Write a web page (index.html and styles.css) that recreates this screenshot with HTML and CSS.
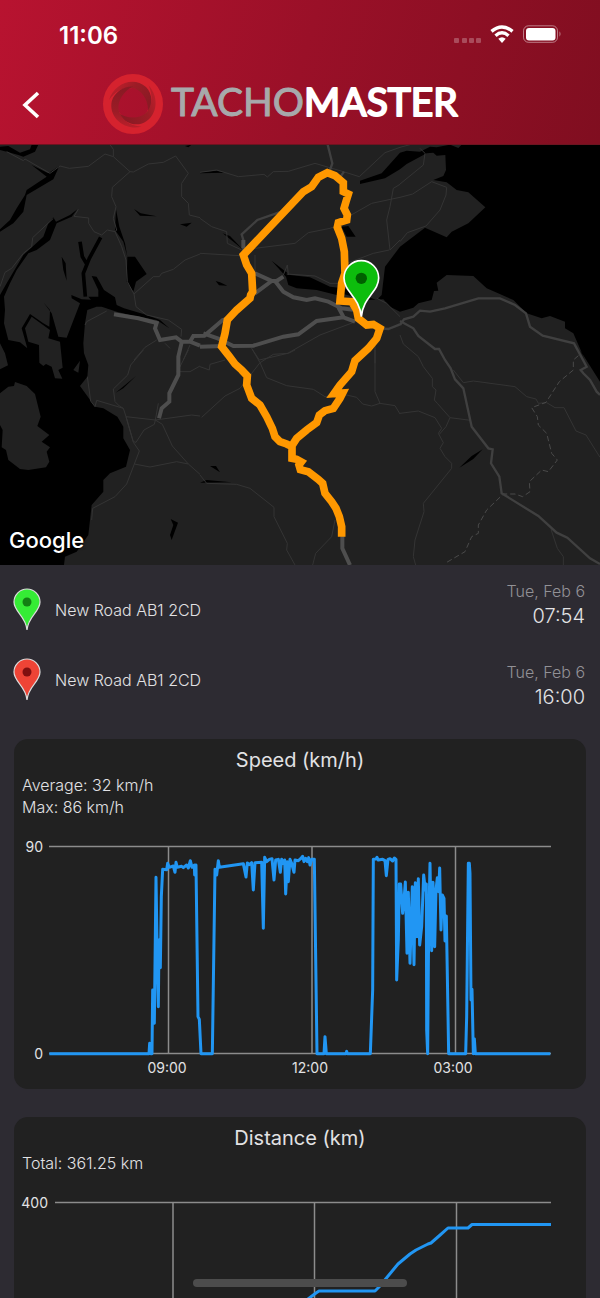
FILE: index.html
```
<!DOCTYPE html>
<html lang="en">

<head>
    <meta charset="UTF-8">
    <meta name="viewport" content="width=device-width, initial-scale=1.0">
    <title>Tachomaster</title>
    <link rel="stylesheet" href="styles.css">
</head>

<body>
    <div class="screen">
        <header class="header">
            <div class="status-bar">
                <span class="clock">11:06</span>
                <svg class="status-icons" width="108" height="20" viewBox="0 0 108 20" aria-hidden="true">
                    <g fill="#fff" fill-opacity=".25">
                        <rect x="0" y="13" width="5" height="5" rx="1" />
                        <rect x="8" y="13" width="5" height="5" rx="1" />
                        <rect x="15" y="13" width="5" height="5" rx="1" />
                        <rect x="22" y="13" width="5" height="5" rx="1" />
                    </g>
                    <g fill="none" stroke="#fff" stroke-width="3.4">
                        <path d="M37.500 6.400Q48 -2.600 58.500 6.400" />
                        <path d="M41.500 10.700Q48 5 54.500 10.700" />
                    </g>
                    <path fill="#fff" d="M44.300 13.700Q48 10.600 51.700 13.700L48 18Z" />
                    <rect x="69.500" y=".800" width="34" height="16.500" rx="5" fill="none" stroke="#fff" stroke-opacity=".45" />
                    <rect x="72" y="3" width="29.500" height="12.500" rx="3" fill="#fff" />
                    <path fill="#fff" fill-opacity=".5" d="M105.500 6.300q2 2.700 0 5.400z" />
                </svg>
            </div>
            <div class="title-bar">
                <button class="back" type="button" aria-label="Back">
                    <svg width="20" height="28" viewBox="0 0 20 28">
                        <path d="M18 2L5 14l13 12" fill="none" stroke="#fff" stroke-width="3.600" />
                    </svg>
                </button>
                <svg class="logo" width="360" height="64" viewBox="0 0 360 64" role="img" aria-label="Tachomaster">
                    <defs>
                        <linearGradient id="blade" x1="0" y1="0" x2="1" y2=".6">
                            <stop offset="0" stop-color="#cc212d" />
                            <stop offset=".5" stop-color="#9c1c26" />
                            <stop offset="1" stop-color="#8a1a24" />
                        </linearGradient>
                        <path id="swirl" d="M7 27C12 10 32 3 44 14C51 21 51 33 46 40C47 30 42 19 33 15.500C24 13 14 17 7 27Z" fill="url(#blade)" />
                    </defs>
                    <circle cx="31" cy="31" r="23" fill="none" stroke="#d5222e" stroke-width="14" />
                    <use href="#swirl" />
                    <use href="#swirl" transform="rotate(120 31 31)" />
                    <use href="#swirl" transform="rotate(240 31 31)" />
                    <text class="logo-text" x="69" y="43"><tspan class="logo-grey">TACHO</tspan><tspan class="logo-white">MASTER</tspan></text>
                </svg>
            </div>
        </header>

        <div class="map">
            <svg viewBox="0 0 1800 1260" preserveAspectRatio="xMidYMid slice" aria-label="Route map">
                <!-- water -->
                <g transform="translate(0 -15)">
                    <path d="M160 232L168 245L210 225L232 208L215 230L170 250L150 300L110 330L85 340L50 390L30 430L12 470L15 510L12 550L25 600L60 607L82 625L65 565L90 522L130 550L148 560L150 510L130 487L155 520L175 590L200 593L240 490L215 475L214 465L245 478L290 480L290 500L262 510L255 550L250 610L252 640L265 675L262 710L240 738L285 800L310 805L352 830L370 860L370 895L390 930L378 980L330 1000L310 1020L310 1055L275 1095L265 1185L230 1235L195 1250L192 1275L0 1275L0 465L20 430L70 345L130 290L145 250Z" />
                    <path d="M0 20L25 18L60 38L90 28L95 14L115 14L105 35L70 50L55 45L20 35L0 30ZM95 75L145 100L178 78L160 118L80 165L70 215L40 250L0 275V268L30 240L50 205L75 165L80 150L140 110Z" />
                    <path d="M348 208L358 260L375 310L382 350L405 350L440 402L408 425L400 455L380 425L382 350L370 305L345 270ZM275 408L290 410L312 450L345 472L350 495L372 505L440 525L480 540L508 565L470 540L390 525L350 515L305 500L290 500L265 470L295 470L295 450ZM185 350L197 370L200 422L190 390ZM402 207L422 220L470 229L420 227ZM540 253L575 248L560 260ZM555 18L575 14L565 22ZM347 758L408 708L370 745ZM512 1137L534 1148L515 1200L510 1185L520 1155Z" />
                    <path d="M302 292L268 355L250 400L256 470M240 305L247 350L262 375" fill="none" stroke="#000" stroke-width="11" />
                    <path class="land" d="M0 760L25 740L42 738L45 726L80 738L105 762L122 830L112 858L148 885L125 905L150 922L140 935L148 965L138 982L85 990L60 987L25 960L18 930L5 922L8 870L0 855ZM0 610L15 640L24 676L0 688ZM117 615L118 668L130 678L138 672L155 680L165 715L187 716L175 690L188 683L180 605L145 595L150 570L95 530L75 565L85 605ZM240 662L220 690L235 698Z" />
                </g>
                <g transform="translate(600 -15)">
                    <path d="M0 97L50 92L75 98L0 100ZM425 260L445 258L467 290L440 290ZM68 280L90 288L128 328L100 305ZM47 423L60 427L82 437L57 436ZM30 978L48 978L60 997ZM0 1028L20 1020L95 1027Z" />
                    <path d="M778 983L815 948L848 928L820 957Z" />
                </g>
                <path d="M1385 -1L1800 -1L1800 710L1740 615L1755 645L1720 565L1695 550L1695 530L1650 513L1625 520L1580 505L1540 465L1460 430L1420 393L1340 390L1310 413L1315 437L1302 438L1295 465L1255 475L1240 488L1200 500L1170 485L1150 463L1100 465L1030 447L1010 450L950 435L890 430L865 420L858 395L815 347L870 390L930 397L990 425L1030 430L1130 465L1145 450L1155 365L1200 305L1275 248L1340 277L1355 260L1405 235L1456 187L1405 142L1370 135L1340 112L1300 105L1330 93L1338 75L1336 30L1310 32L1300 23L1280 25L1220 57L1200 73L1155 100L1080 117V107L1145 85L1200 23L1220 17L1260 20L1290 5L1310 7L1350 -1L1375 9Z" />

                <!-- small roads -->
                <g class="road-thin" transform="translate(0 -15)">
                    <path d="M20 35L70 62L75 57L150 100L180 78L208 85L265 79L315 42L340 50L390 95L400 96L445 72L490 67L527 48L565 100L545 130V170L565 190L568 225L600 233M330 14L340 28V50M390 95L337 142L335 170L348 200L340 235L350 270L345 275L322 270L305 285L282 275L266 250V234L222 229L235 208M160 235L98 293L95 320L70 340L35 385L15 397L0 440" />
                    <path d="M345 275L365 320L378 360L382 425L402 462L460 410H478L485 400L520 388L555 360L600 342M402 462L408 500L440 525L505 540L545 568L543 590M320 513L260 545L255 555M470 600L435 622L402 660M495 610L510 625M570 615L550 660M430 630L392 675L383 705L340 747L345 785L358 798L370 805M262 710L272 783L285 800L290 781L370 805L378 830L400 905L408 907L432 870L463 853L466 840L378 830L400 907L418 933L403 972L380 1032L345 1070L278 1105L275 1140M466 840L575 825L600 828M466 840L475 790M466 840L487 853L517 918L565 972L600 1003M403 972L450 981L530 965L565 972M530 695H570L600 678M535 690L565 630" />
                </g>
                <g class="road-thin" transform="translate(600 -15)">
                    <path d="M0 97L50 90L115 110L192 103L202 111L220 95L265 94L345 70L430 95L478 110L555 38L600 22M600 172L515 190L445 230M600 133L580 145L570 200L560 240L570 330L600 300M568 330L520 340L440 370M165 325L285 310L325 278L390 265L410 258M0 235L35 260L80 275L82 310L125 330M0 340L120 347M165 345V400M250 405L262 375L265 405M260 402L345 408L390 430L430 430" />
                    <path d="M155 625L178 660L263 640L360 585L480 540M525 595V670M155 625L180 668L200 713L260 737L340 748L375 770L440 765L470 772L488 792L515 798L540 790L525 755V630M540 790L585 797L600 822M180 668L120 745L75 768L5 832M180 668L220 643L265 640L285 630M75 660L30 673L28 690L0 680M0 1005L20 1030L110 1033L150 1045L222 1102V1130L262 1210L260 1230L285 1275M405 1140L395 1190L347 1240L338 1275M530 475L560 490L600 530M380 770L400 755" />
                </g>
                <g class="road-thin" transform="translate(1200 -15)">
                    <path d="M60 25L75 40L70 75L0 132M0 172L38 162L95 125L140 142L138 165L120 210L78 258L22 278L0 305M0 22L30 14M0 585L10 612L55 650L70 680L97 715V740L108 750L103 780L112 790L150 833L212 841M0 820L55 813L105 833L125 865L115 880L130 908L120 925L135 950L155 970V985L70 1090L72 1115L45 1200L40 1250L47 1275M150 833L138 860L118 883M160 690L190 728L220 723L345 740L380 770L408 777L415 790L440 788L465 803L492 803L528 873L558 885L600 952M453 1168L472 1225L490 1250V1275" />
                    <path class="road-border" d="M535 647L520 660V690L478 725L438 787L395 803L412 830L415 855L440 880L455 940L472 960L445 995L425 990L388 1025L390 1055L368 1070L345 1062H310L260 1110L235 1155V1180L215 1190L195 1235L135 1270" />
                </g>

                <!-- main roads -->
                <g class="road-mid" transform="translate(600 -15)">
                    <path d="M383 14L397 70L390 90M432 95L420 112M130 340V300L125 283L172 240L235 218L260 210M540 565L565 567L600 553" />
                    <path d="M600 555L612 538L640 530L660 512L690 515L735 505L835 475H900L945 495L978 520L990 560L1028 587L1122 610L1160 680L1142 690L1150 700L1170 720L1190 755L1200 765" />
                    <path d="M600 543L640 565L655 588L705 627H717L735 660L752 685L765 718L790 745L815 860L865 925L878 928L873 970L898 1010L905 1060L1015 1128L1070 1178L1102 1193L1170 1255L1200 1272" />
                </g>
                <g class="road-main">
                    <path d="M342 508L415 520L470 534L465 550L480 585L528 577L545 590L570 590L600 602M545 592L535 635V690L508 745V770L485 790L477 820" />
                    <path d="M570 590L580 573L613 572L668 525L680 522M610 565L655 581L700 603L760 602L850 575L895 568L950 528L1030 517L1065 530M600 605L670 603M765 385L815 408L765 445M815 408H830L850 395M825 408L850 440L880 457L920 465L945 460L985 470L1025 490L1065 495M1015 487L1030 515M730 285V310M1027 1170V1210L1050 1260" />
                </g>

                <!-- driven route -->
                <path class="route" d="M1025 1175V1145L1018 1115L1008 1090L995 1070L975 1045L968 1015L955 1003L925 980L901 974L897 960L904 951L890 943L876 940V905L860 897L840 890L825 875L817 850L800 815L780 780L755 760L740 720L742 693L725 675L705 657L685 630L665 605L675 565L682 525L710 495L750 460L752 450L758 440L755 385L740 360L730 330L910 140L935 125L955 97L982 83L1005 92L1030 113V140L1045 147L1038 170L1032 190L1042 210L1040 225L1015 233L1012 247L1025 280L1033 320L1035 385L1025 415L1020 468L1055 470L1070 495L1075 520L1100 540L1120 538L1140 550L1130 580L1105 610L1065 647L1055 680L1020 720L1002 746L1028 744L1020 760L1000 790L975 797L958 810L950 833L920 855L890 880L874 905" />

                <path d="M1084 515c-6-60-52-75-52-116a52 52 0 0 1 104 0c0 41-46 56-52 116z" fill="#0dbd0d" stroke="#fff" stroke-width="5" />
                <circle cx="1084" cy="400" r="17" fill="#006000" />
            </svg>
            <span class="map-credit">Google</span>
        </div>

        <section class="journey">
            <div class="places">
                <div class="place">
                    <svg width="28" height="43" viewBox="0 0 28 43" aria-hidden="true">
                        <path d="M14 42c-1-14-13-18-13-28a13 13 0 0 1 26 0c0 10-12 14-13 28z" fill="#35ec35" stroke="#ddd" stroke-width="1.200" />
                        <circle cx="14" cy="14" r="4.500" fill="#138013" />
                    </svg>
                    <span>New Road AB1 2CD</span>
                </div>
                <div class="place">
                    <svg width="28" height="43" viewBox="0 0 28 43" aria-hidden="true">
                        <path d="M14 42c-1-14-13-18-13-28a13 13 0 0 1 26 0c0 10-12 14-13 28z" fill="#ee4436" stroke="#ddd" stroke-width="1.200" />
                        <circle cx="14" cy="14" r="4.500" fill="#801010" />
                    </svg>
                    <span>New Road AB1 2CD</span>
                </div>
            </div>
            <div class="times">
                <div class="stamp">
                    <div class="date">Tue, Feb 6</div>
                    <div class="time">07:54</div>
                </div>
                <div class="stamp">
                    <div class="date">Tue, Feb 6</div>
                    <div class="time">16:00</div>
                </div>
            </div>
        </section>

        <section class="card">
            <h2>Speed (km/h)</h2>
            <p>Average: 32 km/h</p>
            <p>Max: 86 km/h</p>
            <svg class="chart" viewBox="0 0 572 271">
                <path class="grid" d="M35 28.500H537M35 235.500H537M154.500 28V236M298 28V236M441.500 28V236" />
                <g transform="translate(-14 12) scale(.33333)">
                    <path class="line" d="M148 671H447L449 640L452 671H456L458 480L463 580L468 142L472 400L475 530L477 330L481 413L484 200L488 118L500 119L503 100L508 112L520 108L525 127L528 97L532 112L545 109L550 113L560 105L565 114L571 92L576 112L583 105L584 135L588 105L594 560L598 568L603 671H637L645 118L650 135L655 92L658 112L730 101L738 141L742 99L748 104L755 98L760 180L765 98L785 97L790 295L794 82L800 95L808 88L816 86L822 150L827 90L835 88L841 127L845 88L850 100L854 90L857 192L862 95L865 155L870 88L875 100L882 127L885 90L895 92L902 86L908 79L912 95L917 85L922 95L926 83L930 105L935 88L943 88L951 671H972L975 620L979 671H1038L1040 664L1042 671H1111L1118 480L1120 88L1128 87L1131 82L1135 90L1148 88L1155 92L1159 137L1164 88L1170 86L1178 93L1183 84L1188 88L1190 450L1195 330L1198 162L1202 162L1208 250L1212 210L1216 156L1221 370L1225 187L1230 400L1237 170L1242 404L1246 158L1251 320L1255 146L1259 345L1265 290L1271 135L1276 180L1279 162L1280 600L1283 671L1286 300L1290 100L1295 362L1299 157L1304 350L1308 180L1312 143L1316 185L1319 114L1323 300L1327 195L1332 205L1335 333L1339 258L1346 671H1397L1400 560L1405 100H1408L1410 130L1413 510L1416 478L1420 671L1423 626L1426 671H1651" />
                </g>
                <g class="axis">
                    <text x="29" y="34" text-anchor="end">90</text>
                    <text x="29" y="241" text-anchor="end">0</text>
                    <text x="153" y="255" text-anchor="middle">09:00</text>
                    <text x="296" y="255" text-anchor="middle">12:00</text>
                    <text x="439" y="255" text-anchor="middle">03:00</text>
                </g>
            </svg>
        </section>

        <section class="card">
            <h2>Distance (km)</h2>
            <p>Total: 361.25 km</p>
            <svg class="chart" viewBox="0 0 572 271">
                <path class="grid" d="M41 28.500H537M41 235.500H537M159 28V236M300.500 28V236M442.500 28V236" />
                <path class="line-thin" d="M41 235H140L170 200L192 190L290 128L298 122L302 119L305 117H361L365 113L384 90L396 80L402 76L414 70L417 69L425 62L434 54H454L458 50.500H537" />
                <g class="axis">
                    <text x="34" y="34" text-anchor="end">400</text>
                </g>
            </svg>
        </section>

        <div class="home-indicator"></div>
    </div>
</body>

</html>
```

FILE: styles.css
```
* {
    box-sizing: border-box;
}

body {
    margin: 0;
    background-color: #2d2b32;
    color: #e2e2e4;
    font-family: Inter, "Liberation Sans", sans-serif;
    font-size: 16px;
    font-weight: 300;
}

.screen {
    position: relative;
    height: 100vh;
    overflow: hidden;
}

.header {
    height: 145px;
    background: linear-gradient(105deg, #b81330 0%, #9a1028 50%, #800e20 100%);
    border-bottom: 1px solid #6d1420;
}

.status-bar {
    display: flex;
    justify-content: space-between;
    align-items: center;
    height: 70px;
    padding: 0 38px 0 59px;
}

.clock {
    color: #fff;
    font-size: 24px;
    font-weight: 600;
}

.title-bar {
    display: flex;
    align-items: center;
    height: 70px;
    padding: 0 20px;
}

.back {
    display: flex;
    padding: 0;
    border: none;
    background: none;
    cursor: pointer;
}

.logo {
    margin-left: 62px;
}

.logo-text {
    font-family: Lato, sans-serif;
    font-size: 39px;
    font-weight: 400;
    stroke-linejoin: round;
}

.logo-grey {
    fill: #a7a9ab;
    stroke: #a7a9ab;
    stroke-width: 1px;
}

.logo-white {
    fill: #fff;
    stroke: #fff;
    stroke-width: 2px;
}

.map {
    position: relative;
    height: 420px;
    background-color: #212121;
    overflow: hidden;
}

.map svg {
    display: block;
    width: 100%;
    height: 100%;
}

.land {
    fill: #212121;
}

.road-thin,
.road-mid,
.road-main,
.route {
    fill: none;
}

.road-thin {
    stroke: #343434;
    stroke-width: 3;
}

.road-border {
    stroke: #4a4a4a;
    stroke-dasharray: 16 9;
}

.road-mid {
    stroke: #404040;
    stroke-width: 7;
}

.road-main {
    stroke: #4e4e4e;
    stroke-width: 12;
}

.route {
    stroke: #ff9800;
    stroke-width: 23;
    stroke-linejoin: miter;
}

.map-credit {
    position: absolute;
    left: 9px;
    bottom: 9px;
    color: #fff;
    font-size: 22px;
    font-weight: 500;
    line-height: 32px;
    text-shadow: 0 0 3px #000;
}

.journey {
    display: flex;
    justify-content: space-between;
    height: 174px;
    padding: 15px 15px 0 13px;
}

.places {
    display: flex;
    flex-direction: column;
    gap: 27px;
    padding-top: 8px;
}

.place {
    display: flex;
    align-items: center;
    gap: 14px;
}

.times {
    display: flex;
    flex-direction: column;
    gap: 31px;
    text-align: right;
}

.date {
    color: #929196;
    line-height: 22px;
}

.time {
    font-size: 20px;
    line-height: 28px;
}

.card {
    margin: 0 14px 28px;
    padding-top: 7px;
    border-radius: 14px;
    background-color: #212121;
}

.card h2 {
    margin: 0;
    font-size: 20px;
    font-weight: 400;
    line-height: 28px;
    text-align: center;
}

.card p {
    margin: 0;
    padding-left: 8px;
    line-height: 22px;
}

.chart {
    display: block;
    width: 100%;
}

.grid {
    fill: none;
    stroke: #8c8c8c;
    stroke-width: 1.5;
}

.line,
.line-thin {
    fill: none;
    stroke: #2196f3;
    stroke-width: 9;
    stroke-linejoin: round;
}

.line-thin {
    stroke-width: 3;
}

.axis {
    fill: #e2e2e4;
    font-size: 14px;
    font-weight: 400;
}

.home-indicator {
    position: absolute;
    left: 50%;
    bottom: 11px;
    width: 214px;
    height: 8px;
    border-radius: 4px;
    background-color: #4c4c4c;
    transform: translateX(-50%);
}
```
